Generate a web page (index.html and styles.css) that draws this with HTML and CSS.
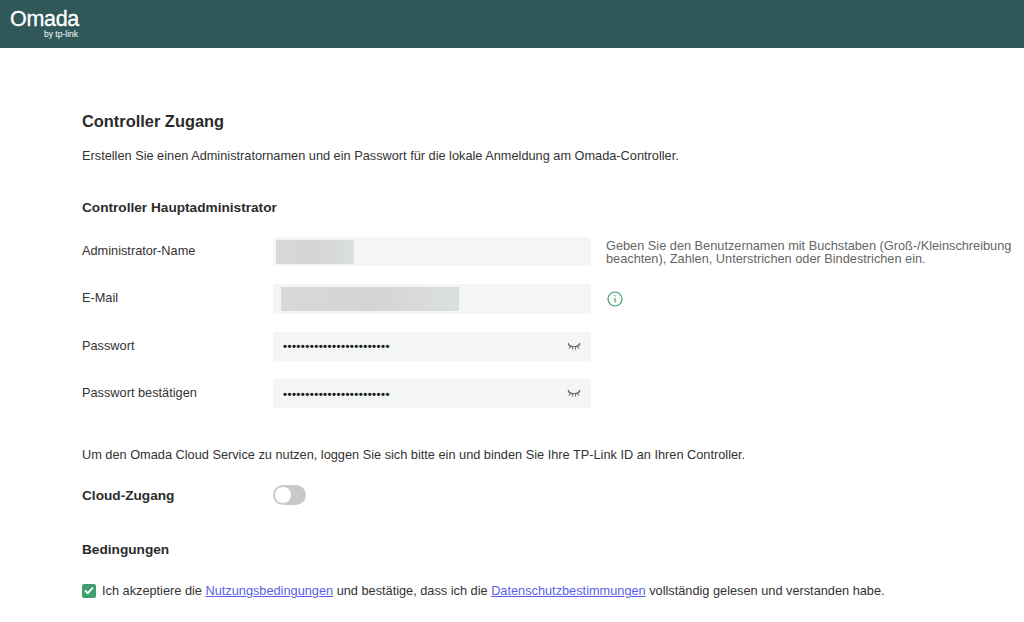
FILE: index.html
```html
<!DOCTYPE html>
<html lang="de">
<head>
<meta charset="utf-8">
<title>Controller Zugang</title>
<link rel="stylesheet" href="styles.css">
</head>
<body>
<header class="topbar">
  <div class="logo">
    <span class="logo-main">Omada</span>
    <span class="logo-sub">by tp-link</span>
  </div>
</header>
<main class="content">
  <h1 class="title">Controller Zugang</h1>
  <p class="desc">Erstellen Sie einen Administratornamen und ein Passwort für die lokale Anmeldung am Omada-Controller.</p>
  <h2 class="section">Controller Hauptadministrator</h2>
  <div class="form">
    <div class="row">
      <span class="label">Administrator-Name</span>
      <div class="field"><span class="blur blur-name"></span></div>
      <p class="hint">Geben Sie den Benutzernamen mit Buchstaben (Groß-/Kleinschreibung beachten), Zahlen, Unterstrichen oder Bindestrichen ein.</p>
    </div>
    <div class="row">
      <span class="label">E-Mail</span>
      <div class="field"><span class="blur blur-mail"></span></div>
      <svg class="info" width="16" height="16" viewBox="0 0 16 16" fill="none" stroke="#3f9f6e">
        <circle cx="8" cy="8" r="7" stroke-width="1.2"/>
        <path d="M8 7v4.5" stroke-width="1.2"/>
        <path d="M8 4.2v1.4" stroke-width="1.2"/>
      </svg>
    </div>
    <div class="row">
      <span class="label">Passwort</span>
      <div class="field field-pass">
        <span class="dots">••••••••••••••••••••••••</span>
        <svg class="eye" width="14" height="9" viewBox="0 0 14 9" fill="none" stroke="#666" stroke-width="1.1">
          <path d="M1 2.5C4 5.5 10 5.5 13 2.5M3.5 4.5L2 6.5M5.5 5.2V7.5M8.5 5.2V7.5M10.5 4.5L12 6.5M1 1L2.5 3M13 1L11.5 3"/>
        </svg>
      </div>
    </div>
    <div class="row">
      <span class="label">Passwort bestätigen</span>
      <div class="field field-pass">
        <span class="dots">••••••••••••••••••••••••</span>
        <svg class="eye" width="14" height="9" viewBox="0 0 14 9" fill="none" stroke="#666" stroke-width="1.1">
          <path d="M1 2.5C4 5.5 10 5.5 13 2.5M3.5 4.5L2 6.5M5.5 5.2V7.5M8.5 5.2V7.5M10.5 4.5L12 6.5M1 1L2.5 3M13 1L11.5 3"/>
        </svg>
      </div>
    </div>
  </div>
  <p class="cloud-note">Um den Omada Cloud Service zu nutzen, loggen Sie sich bitte ein und binden Sie Ihre TP-Link ID an Ihren Controller.</p>
  <div class="cloud-row">
    <span class="cloud-label">Cloud-Zugang</span>
    <span class="toggle"><span class="knob"></span></span>
  </div>
  <h2 class="terms-title">Bedingungen</h2>
  <div class="terms">
    <span class="check">
      <svg width="10" height="9" viewBox="0 0 10 9" fill="none" stroke="#fff" stroke-width="1.8"><path d="M1 4.5L3.8 7.2L9 1.5"/></svg>
    </span>
    <span>Ich akzeptiere die <a href="#">Nutzungsbedingungen</a> und bestätige, dass ich die <a href="#">Datenschutzbestimmungen</a> vollständig gelesen und verstanden habe.</span>
  </div>
</main>
</body>
</html>
```
FILE: styles.css
```css
* { box-sizing: border-box; }
html, body { margin: 0; padding: 0; }
body {
  width: 1024px;
  height: 622px;
  overflow: hidden;
  background: #fff;
  color: #333;
  font-family: "Liberation Sans", Arial, sans-serif;
  font-size: 12.75px;
}
.topbar {
  height: 48px;
  background: #305859;
  padding: 9px 0 0 10px;
}
.logo { display: flex; flex-direction: column; width: 68px; color: #fff; }
.logo-main { font-family: "Liberation Sans", sans-serif; font-size: 21.5px; line-height: 20px; letter-spacing: -0.3px; -webkit-text-stroke: 0.3px #fff; }
.logo-sub { align-self: flex-end; font-size: 8.5px; line-height: 8px; margin-top: 1px; }
.content { padding: 0 0 0 82px; }
.title { margin: 63px 0 0; font-size: 16.4px; line-height: 20px; font-weight: bold; color: #2b2b2b; }
.desc { margin: 18px 0 0; line-height: 14px; }
.section { margin: 37px 0 0; font-size: 13.65px; line-height: 16px; font-weight: bold; color: #2b2b2b; }
.form { margin-top: 21px; display: flex; flex-direction: column; gap: 18px; width: 942px; }
.row { display: flex; align-items: center; height: 29.33px; }
.label { width: 191px; flex: none; line-height: 27px; align-self: flex-start; }
.field {
  width: 318px;
  height: 100%;
  flex: none;
  background: #f4f5f5;
  border-radius: 3px;
  display: flex;
  align-items: center;
}
.field-pass { justify-content: space-between; padding: 0 10px; }
.blur { display: block; height: 24px; background: linear-gradient(90deg, #d8d8d8, #d3d5d4 50%, #dcdfdf); }
.blur-name { width: 78px; margin-left: 3px; }
.blur-mail { width: 178px; margin-left: 8px; }
.dots { color: #1c1c1c; font-size: 11.5px; line-height: 14px; letter-spacing: 0.43px; font-weight: bold; }
.eye { flex: none; }
.hint { margin: 0 0 0 15px; width: 420px; line-height: 13px; color: #666; flex: none; }
.info { margin-left: 16px; flex: none; }
.cloud-note { margin: 40px 0 0; line-height: 14px; }
.cloud-row { display: flex; align-items: center; margin-top: 23px; height: 20px; }
.cloud-label { width: 191px; font-size: 13.65px; font-weight: bold; color: #2b2b2b; }
.toggle { width: 33px; height: 20px; border-radius: 10px; background: #c9c9c9; padding: 2px; display: block; }
.knob { display: block; width: 16px; height: 16px; border-radius: 50%; background: #fff; }
.terms-title { margin: 37px 0 0; font-size: 13.65px; line-height: 16px; font-weight: bold; color: #2b2b2b; }
.terms { display: flex; align-items: center; gap: 6px; margin-top: 25px; }
.check { width: 14px; height: 14px; border-radius: 2px; background: #3f9f6e; display: flex; align-items: center; justify-content: center; flex: none; }
a { color: #5a5fe6; }
```
